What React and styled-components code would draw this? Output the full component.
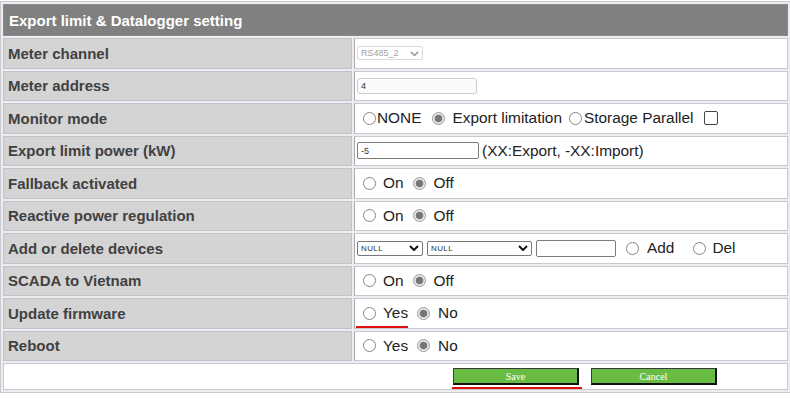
import React from 'react';
import styled, { createGlobalStyle } from 'styled-components';

const Chevron = ({ color = '#111', w = 10, stroke = 2 }) => (
  <svg width={w} height={w * 0.6} viewBox="0 0 10 6">
    <path d="M1 1 L5 5 L9 1" fill="none" stroke={color} strokeWidth={stroke} />
  </svg>
);

const Setting = () => {
  const rows = [
    {
      label: 'Meter channel',
      content: (
        <Line>
          <Select $w={66} $h={14} $muted>
            RS485_2 <Chevron color="#9a9a9a" w={9} stroke={1.7} />
          </Select>
        </Line>
      ),
    },
    {
      label: 'Meter address',
      content: (
        <Line>
          <Field $w={120} $h={16} $light>4</Field>
        </Line>
      ),
    },
    {
      label: 'Monitor mode',
      content: (
        <Line>
          <Radio $ml={6} $mr={1} />NONE
          <Radio $checked $ml={11} $mr={7} />Export limitation
          <Radio $ml={7} $mr={2} />Storage Parallel
          <Check />
        </Line>
      ),
    },
    {
      label: 'Export limit power (kW)',
      content: (
        <Line>
          <Field $w={122} $h={17}>-5</Field>
          <Note>(XX:Export, -XX:Import)</Note>
        </Line>
      ),
    },
    { label: 'Fallback activated', content: <Choice a="On" b="Off" /> },
    { label: 'Reactive power regulation', content: <Choice a="On" b="Off" /> },
    {
      label: 'Add or delete devices',
      content: (
        <Line>
          <Select $w={66} $h={15}>
            NULL <Chevron />
          </Select>
          <Select $w={105} $h={15} $ml={4}>
            NULL <Chevron />
          </Select>
          <Field $w={80} $h={17} $ml={4} />
          <Radio $ml={10} $mr={8} />Add
          <Radio $ml={19} $mr={6} />Del
        </Line>
      ),
    },
    { label: 'SCADA to Vietnam', content: <Choice a="On" b="Off" /> },
    { label: 'Update firmware', content: <Choice a="Yes" b="No" marked /> },
    { label: 'Reboot', content: <Choice a="Yes" b="No" /> },
  ];

  return (
    <Table>
      <tbody>
        <tr>
          <HeadCell colSpan={2}>Export limit &amp; Datalogger setting</HeadCell>
        </tr>
        {rows.map((r) => (
          <tr key={r.label}>
            <Label>{r.label}</Label>
            <Value>{r.content}</Value>
          </tr>
        ))}
        <tr>
          <ButtonCell colSpan={2}>
            <ButtonBar>
              <Button $marked>Save</Button>
              <Button>Cancel</Button>
            </ButtonBar>
          </ButtonCell>
        </tr>
      </tbody>
    </Table>
  );
};

const Choice = ({ a, b, marked }) => (
  <Line>
    {marked ? (
      <Mark>
        <Radio $ml={6} $mr={7} />
        {a}
      </Mark>
    ) : (
      <>
        <Radio $ml={6} $mr={7} />
        {a}
      </>
    )}
    <Radio $checked $ml={9} $mr={8} />
    {b}
  </Line>
);

export default function App() {
  return (
    <>
      <GlobalStyles />
      <Setting />
    </>
  );
}

const GlobalStyles = createGlobalStyle`
  * {
    box-sizing: border-box;
  }
  html, body {
    margin: 0;
    padding: 0;
    background: #fff;
    overflow: hidden;
  }
  body {
    font-family: 'Liberation Sans', Arial, sans-serif;
  }
`;

const Table = styled.table`
  width: 100%;
  margin-top: 1px;
  border: 1px solid #c9c9d2;
  border-right: none;
  border-spacing: 2px;
  background: #ececf1;
`;

const HeadCell = styled.th`
  height: 32px;
  padding: 0 0 0 5px;
  background: #808080;
  border: 1px solid #8a8a8a;
  color: #fff;
  font-size: 15px;
  font-weight: bold;
  text-align: left;
`;

const Label = styled.td`
  width: 349px;
  height: 30.5px;
  padding: 0 0 0 4px;
  background: #d4d4d5;
  border: 1px solid #c2c2cb;
  color: #414141;
  font-size: 15px;
  font-weight: bold;
  white-space: nowrap;
`;

const Value = styled.td`
  height: 30.5px;
  padding: 0 0 0 2px;
  background: #fff;
  border: 1px solid #c8c8d0;
  border-left-color: #a9a9a9;
  color: #222;
  font-size: 15.4px;
`;

const Line = styled.div`
  display: flex;
  align-items: center;
  white-space: nowrap;
`;

const Radio = styled.span`
  flex: none;
  width: 13px;
  height: 13px;
  margin: 0 ${({ $mr }) => $mr ?? 8}px 0 ${({ $ml }) => $ml ?? 9}px;
  border-radius: 50%;
  border: 1px solid ${({ $checked }) => ($checked ? '#9c9c9c' : '#858585')};
  background: ${({ $checked }) =>
    $checked ? 'radial-gradient(circle, #767676 0 3.4px, #e6e6e6 4.2px)' : '#fff'};
`;

const Check = styled.span`
  flex: none;
  width: 14px;
  height: 14px;
  margin-left: 11px;
  border: 1px solid #444;
  border-radius: 2px;
  background: #fff;
`;

const Field = styled.span`
  flex: none;
  display: inline-flex;
  align-items: center;
  width: ${({ $w }) => $w}px;
  height: ${({ $h }) => $h}px;
  margin-left: ${({ $ml }) => $ml ?? 0}px;
  padding-left: 3px;
  border: 1px solid ${({ $light }) => ($light ? '#cdcdcd' : '#7a7a7a')};
  border-radius: ${({ $light }) => ($light ? 3 : 2)}px;
  background: ${({ $light }) => ($light ? '#fafafa' : '#fff')};
  color: #333;
  font-size: 9px;
`;

const Select = styled.span`
  flex: none;
  display: inline-flex;
  align-items: center;
  justify-content: space-between;
  width: ${({ $w }) => $w}px;
  height: ${({ $h }) => $h}px;
  margin-left: ${({ $ml }) => $ml ?? 0}px;
  padding: 0 3px 0 3px;
  border: 1px solid ${({ $muted }) => ($muted ? '#d9d9d9' : '#777')};
  border-radius: 2px;
  color: ${({ $muted }) => ($muted ? '#a0a0a0' : '#333')};
  font-size: ${({ $muted }) => ($muted ? 9 : 8)}px;
  letter-spacing: ${({ $muted }) => ($muted ? 0 : 0.4)}px;
`;

const Note = styled.span`
  margin-left: 3px;
`;

const Mark = styled.span`
  position: relative;
  display: inline-flex;
  align-items: center;
  &::after {
    content: '';
    position: absolute;
    left: -1px;
    right: 0;
    bottom: -6px;
    height: 2px;
    background: #e01010;
  }
`;

const ButtonCell = styled.td`
  height: 27px;
  padding: 0 0 0 449px;
  background: #fff;
  border: 1px solid #c8c8d0;
`;

const ButtonBar = styled.div`
  display: flex;
  gap: 12px;
`;

const Button = styled.button`
  position: relative;
  width: 126px;
  height: 17px;
  padding: 0;
  background: #69bc43;
  border-style: solid;
  border-width: 1px 2px 2px 1px;
  border-color: #3a3a3a #111 #111 #3a3a3a;
  color: #fff;
  font-family: 'Liberation Serif', 'Times New Roman', serif;
  font-size: 10px;
  &::after {
    content: '';
    display: ${({ $marked }) => ($marked ? 'block' : 'none')};
    position: absolute;
    left: -2px;
    right: -5px;
    bottom: -6px;
    height: 2px;
    background: #e01010;
  }
`;
